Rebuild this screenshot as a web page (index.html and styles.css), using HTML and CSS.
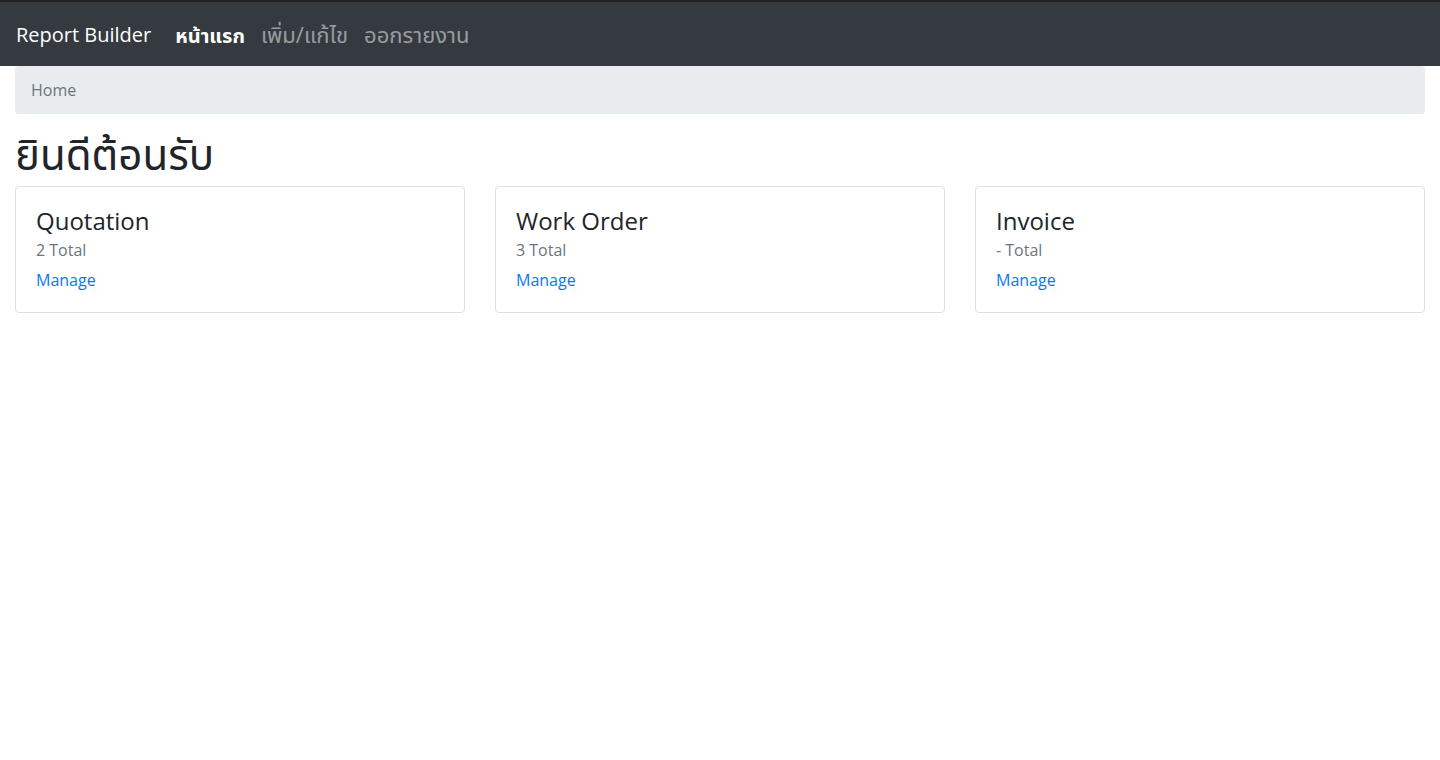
FILE: index.html
```html
<!DOCTYPE html>
<html lang="th">
<head>
<meta charset="utf-8">
<title>Report Builder</title>
<link rel="stylesheet" href="styles.css">
</head>
<body>
<nav class="navbar">
  <a class="brand" href="#">Report Builder</a>
  <ul class="nav">
    <li><a class="nav-link active" href="#">หน้าแรก</a></li>
    <li><a class="nav-link" href="#">เพิ่ม/แก้ไข</a></li>
    <li><a class="nav-link" href="#">ออกรายงาน</a></li>
  </ul>
</nav>
<main class="container">
  <div class="breadcrumb">Home</div>
  <h1 class="title">ยินดีต้อนรับ</h1>
  <div class="cards">
    <div class="card">
      <h4 class="card-title">Quotation</h4>
      <div class="card-sub">2 Total</div>
      <a class="card-link" href="#">Manage</a>
    </div>
    <div class="card">
      <h4 class="card-title">Work Order</h4>
      <div class="card-sub">3 Total</div>
      <a class="card-link" href="#">Manage</a>
    </div>
    <div class="card">
      <h4 class="card-title">Invoice</h4>
      <div class="card-sub">- Total</div>
      <a class="card-link" href="#">Manage</a>
    </div>
  </div>
</main>
</body>
</html>
```
FILE: styles.css
```css
* { box-sizing: border-box; }
body {
  margin: 0;
  font-family: "Open Sans", "Noto Sans Thai", "Noto Sans", sans-serif;
  font-size: 16px;
  line-height: 1.5;
  color: #212529;
  background: #fff;
}
a { text-decoration: none; }
.navbar {
  display: flex;
  align-items: center;
  height: 66px;
  border-top: 2px solid #222;
  background: #343a40;
  padding: 2px 16px 0;
}
.brand {
  color: #fff;
  font-size: 20px;
  margin-right: 16px;
  line-height: 30px;
}
.nav {
  display: flex;
  align-items: baseline;
  list-style: none;
  margin: 0;
  padding: 0;
}
.nav-link {
  display: block;
  padding: 0 8px;
  font-size: 22px;
  line-height: 30px;
  color: rgba(255,255,255,.5);
}
.nav-link.active { color: #fff; font-weight: 700; font-size: 20px; }
.container { padding: 0 15px; }
.breadcrumb {
  background: #e9ecef;
  border-radius: 4px;
  padding: 12px 16px;
  color: #6c757d;
  margin-bottom: 16px;
}
.title {
  margin: 0 0 8px;
  font-size: 42px;
  font-weight: 400;
  line-height: 48px;
}
.cards {
  display: grid;
  grid-template-columns: repeat(3, 1fr);
  gap: 30px;
}
.card {
  border: 1px solid rgba(0,0,0,.125);
  border-radius: 4px;
  padding: 20px;
}
.card-title {
  margin: 0 0 2px;
  font-size: 24px;
  font-weight: 400;
  line-height: 1.2;
}
.card-sub { color: #6c757d; margin-bottom: 6px; }
.card-link { color: #007bff; }
```
